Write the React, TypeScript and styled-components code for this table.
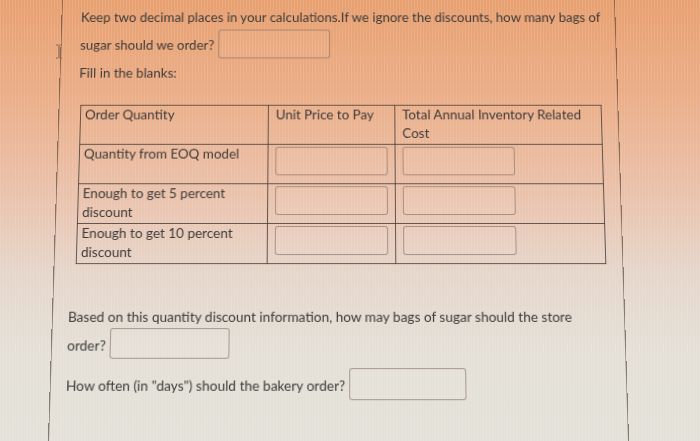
import styled, { createGlobalStyle } from "styled-components";

const GlobalStyle = createGlobalStyle`
  html, body {
    margin: 0;
    padding: 0;
    overflow: hidden;
  }
  body {
    font-family: Lato, "Open Sans", "Liberation Sans", sans-serif;
  }
`;

// the photo: warm orange glare on top fading into grey, with moiré stripes
const Screen = styled.div`
  position: relative;
  width: 700px;
  height: 441px;
  overflow: hidden;
  background:
    repeating-linear-gradient(90deg, rgba(255, 255, 255, 0.1) 0 1px, transparent 1px 3px),
    linear-gradient(
      180deg,
      #e8a070 0%,
      #ebae88 22%,
      #eac3ad 45%,
      #e6d6cb 62%,
      #e4e0d7 80%,
      #e3e1d8 100%
    );
`;

// the question panel, tilted a little like the photo was taken
const Sheet = styled.div`
  box-sizing: border-box;
  width: 567px;
  height: 490px;
  margin: -20px 0 0 55px;
  padding: 20px 0 0 19px;
  border-left: 1px solid rgba(70, 55, 45, 0.6);
  border-right: 1px solid rgba(70, 55, 45, 0.6);
  transform-origin: 283px 240px;
  transform: perspective(600px) rotateX(3.86deg);
  color: #3e3a38;
  font-size: 13.5px;
`;

const Line = styled.div`
  height: 24px;
  line-height: 24px;
  white-space: nowrap;
`;

const Label = styled.div<{ $top?: number }>`
  line-height: 22px;
  margin-top: ${(p) => p.$top ?? 0}px;
  white-space: nowrap;
`;

const AnswerRow = styled.div<{ $h: number; $top?: number }>`
  display: flex;
  align-items: center;
  gap: 4px;
  height: ${(p) => p.$h}px;
  margin-top: ${(p) => p.$top ?? 0}px;
  white-space: nowrap;
`;

const RowText = styled.span`
  padding-top: 3px;
`;

const Blank = styled.input<{ $w: number; $h: number }>`
  box-sizing: border-box;
  width: ${(p) => p.$w}px;
  height: ${(p) => p.$h}px;
  margin: 0;
  padding: 0 6px;
  border: 1px solid rgba(125, 105, 92, 0.6);
  border-radius: 3px;
  background: rgba(255, 255, 255, 0.05);
  font: inherit;
  outline: none;
`;

const Grid = styled.table`
  width: 527px;
  margin: 22px 0 0 2px;
  border-collapse: collapse;
  table-layout: fixed;

  td {
    height: 40px;
    box-sizing: border-box;
    padding: 0 7px;
    vertical-align: top;
    line-height: 19px;
    border: 1px solid rgba(75, 65, 60, 0.85);
  }

  td:first-child {
    padding: 0 4px;
  }
`;

const CellBlank = styled(Blank)`
  display: block;
  margin-top: 2px;
`;

const Bottom = styled.div`
  margin: 41px 0 0 -4px;
`;

const Cursor = styled.svg`
  position: absolute;
  left: 55px;
  top: 44px;
`;

const rows = [
  "Quantity from EOQ model",
  "Enough to get 5 percent discount",
  "Enough to get 10 percent discount",
];

export default function App() {
  return (
    <Screen>
      <GlobalStyle />
      <Sheet>
        <Line>
          Keep two decimal places in your calculations.If we ignore the
          discounts, how many bags of
        </Line>
        <AnswerRow $h={31}>
          <RowText>sugar should we order?</RowText>
          <Blank $w={114} $h={30} aria-label="bags without discounts" />
        </AnswerRow>
        <Label $top={4}>Fill in the blanks:</Label>

        <Grid>
          <colgroup>
            <col style={{ width: 190 }} />
            <col style={{ width: 128 }} />
            <col style={{ width: 209 }} />
          </colgroup>
          <tbody>
            <tr>
              <td>Order Quantity</td>
              <td>Unit Price to Pay</td>
              <td>Total Annual Inventory Related Cost</td>
            </tr>
            {rows.map((r) => (
              <tr key={r}>
                <td>{r}</td>
                <td>
                  <CellBlank $w={113} $h={29} aria-label={`${r} unit price`} />
                </td>
                <td>
                  <CellBlank $w={113} $h={29} aria-label={`${r} total cost`} />
                </td>
              </tr>
            ))}
          </tbody>
        </Grid>

        <Bottom>
          <Label>
            Based on this quantity discount information, how may bags of sugar
            should the store
          </Label>
          <AnswerRow $h={30}>
            <RowText>order?</RowText>
            <Blank $w={118} $h={30} aria-label="bags to order" />
          </AnswerRow>
          <AnswerRow $h={31} $top={9}>
            <RowText>How often (in "days") should the bakery order?</RowText>
            <Blank $w={115} $h={31} aria-label="days between orders" />
          </AnswerRow>
        </Bottom>
      </Sheet>

      <Cursor width="8" height="15" viewBox="0 0 8 15">
        <path
          d="M1 1h2.5M4.5 1H7M4 1.5v12M1 14h2.5M4.5 14H7"
          stroke="#8a6a55"
          strokeWidth="1.2"
          fill="none"
        />
      </Cursor>
    </Screen>
  );
}
